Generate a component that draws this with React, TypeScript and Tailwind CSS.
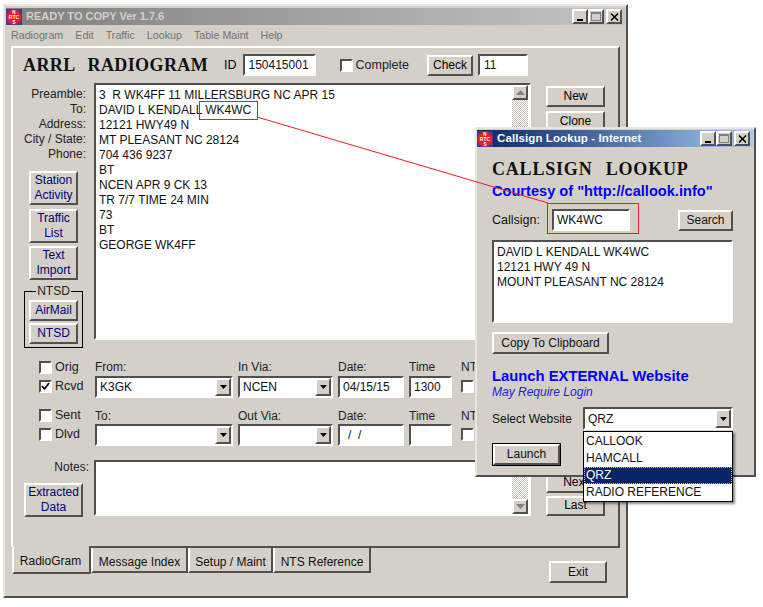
import type { ReactNode } from 'react';

const raised = 'border-2 border-t-white border-l-white border-r-[#505050] border-b-[#505050]';
const sunken = 'border-2 border-t-[#505050] border-l-[#505050] border-r-white border-b-white bg-white';

function AppIcon() {
  return (
    <svg width="16" height="16" viewBox="0 0 16 16" className="shrink-0">
      <rect width="16" height="16" fill="#3c3c9c" />
      <circle cx="8" cy="8" r="7.5" fill="#ee1c25" />
      <text x="8" y="5" textAnchor="middle" fontSize="4.6" fontWeight="700" fill="#fff" fontFamily="Liberation Sans">N</text>
      <text x="8" y="9.8" textAnchor="middle" fontSize="5" fontWeight="700" fill="#fff" fontFamily="Liberation Sans">RTC</text>
      <text x="8" y="14.8" textAnchor="middle" fontSize="4.6" fontWeight="700" fill="#fff" fontFamily="Liberation Sans">S</text>
    </svg>
  );
}

function TitleBar({ title, active }: { title: string; active?: boolean }) {
  return (
    <div
      className={
        active
          ? 'flex h-[17px] items-center bg-gradient-to-r from-[#0a246a] to-[#a6caf0] pr-[3px] text-white'
          : 'flex h-[17px] items-center bg-gradient-to-r from-[#808080] to-[#c4c4c4] pr-[3px] text-[#d4d0c8]'
      }
    >
      <AppIcon />
      <span className={active ? 'ml-[4px] text-[11.5px] font-bold tracking-[0.1px]' : 'ml-[4px] text-[11px] font-bold'}>{title}</span>
      <div className="ml-auto flex">
        <div className={`${raised} flex h-[15px] w-[16px] items-end bg-[#d4d0c8] pb-[1px] pl-[3px]`}>
          <div className="h-[2px] w-[6px] bg-black" />
        </div>
        <div className={`${raised} flex h-[15px] w-[16px] items-center justify-center bg-[#d4d0c8]`}>
          <div className="h-[9px] w-[10px] border border-t-2 border-[#808080]" />
        </div>
        <div className={`${raised} ml-[2px] flex h-[15px] w-[16px] items-center justify-center bg-[#d4d0c8]`}>
          <svg width="9" height="8" viewBox="0 0 9 8">
            <path d="M1 0.5L8 7.5M8 0.5L1 7.5" stroke="#000" strokeWidth="1.5" />
          </svg>
        </div>
      </div>
    </div>
  );
}

function Btn({ children, className = '' }: { children: ReactNode; className?: string }) {
  return (
    <div className={`${raised} flex items-center justify-center bg-[#d4d0c8] text-center text-[12px] leading-[15px] ${className}`}>
      {children}
    </div>
  );
}

function Field({ children, className = '' }: { children?: ReactNode; className?: string }) {
  return <div className={`${sunken} flex items-center pl-[3px] text-[12px] text-[#111] ${className}`}>{children}</div>;
}

function Combo({ value, className = '' }: { value?: string; className?: string }) {
  return (
    <div className={`${sunken} flex items-center pl-[3px] text-[12px] text-[#111] ${className}`}>
      <span>{value}</span>
      <div className={`${raised} ml-auto flex h-full w-[16px] items-center justify-center bg-[#d4d0c8]`}>
        <svg width="7" height="4" viewBox="0 0 7 4">
          <path d="M0 0H7L3.5 4Z" fill="#000" />
        </svg>
      </div>
    </div>
  );
}

function Check({ label, checked }: { label: string; checked?: boolean }) {
  return (
    <div className="flex h-[13px] items-center">
      <div className={`${sunken} flex h-[13px] w-[13px] shrink-0 items-center justify-center`}>
        {checked && (
          <svg width="9" height="9" viewBox="0 0 9 9">
            <path d="M1 4L3.5 7L8 1" stroke="#000" strokeWidth="1.7" fill="none" />
          </svg>
        )}
      </div>
      <span className="ml-[3px] text-[12.5px] text-[#222]">{label}</span>
    </div>
  );
}

function ScrollBar({ showUp, showDown }: { showUp?: boolean; showDown?: boolean }) {
  const arrowBtn = `${raised} flex h-[15px] w-full shrink-0 items-center justify-center bg-[#d4d0c8]`;
  return (
    <div className="flex h-full w-[16px] flex-col justify-between bg-[repeating-conic-gradient(#c8c4bc_0_25%,#ffffff_0_50%)] bg-[length:2px_2px]">
      {showUp && (
        <div className={arrowBtn}>
          <svg width="9" height="5" viewBox="0 0 9 5">
            <path d="M0 5H9L4.5 0Z" fill="#808080" />
          </svg>
        </div>
      )}
      <div />
      {showDown && (
        <div className={arrowBtn}>
          <svg width="9" height="5" viewBox="0 0 9 5">
            <path d="M0 0H9L4.5 5Z" fill="#808080" />
          </svg>
        </div>
      )}
    </div>
  );
}

const message = [
  '3  R WK4FF 11 MILLERSBURG NC APR 15',
  'DAVID L KENDALL WK4WC',
  '12121 HWY49 N',
  'MT PLEASANT NC 28124',
  '704 436 9237',
  'BT',
  'NCEN APR 9 CK 13',
  'TR 7/7 TIME 24 MIN',
  '73',
  'BT',
  'GEORGE WK4FF',
];

function MainWindow() {
  return (
    <div className="absolute left-[3px] top-[4px] flex h-[594px] w-[625px] flex-col border-2 border-t-[#e8e6e0] border-l-[#e8e6e0] border-r-[#505050] border-b-[#505050] bg-[#d4d0c8] px-px pt-[2px]">
      <TitleBar title="READY TO COPY Ver 1.7.6" />
      <div className="ml-[5px] flex h-[21px] items-center gap-[12px] text-[10.7px] text-[#707070]">
        <span>Radiogram</span>
        <span>Edit</span>
        <span>Traffic</span>
        <span>Lookup</span>
        <span>Table Maint</span>
        <span>Help</span>
      </div>

      <div className="ml-[5px] mr-[5px] flex h-[502px] flex-col border-2 border-t-white border-l-white border-r-[#505050] border-b-[#505050] text-[12px]">
        {/* header */}
        <div className="mt-[6px] flex h-[22px] items-center">
          <span className="ml-[10px] w-[201px] whitespace-pre font-['Liberation_Serif',serif] text-[18px] font-bold tracking-[0.4px] [word-spacing:8px] text-[#111]">ARRL RADIOGRAM</span>
          <span className="text-[12.5px]">ID</span>
          <Field className="ml-[6px] h-[22px] w-[73px]"><span className="ml-px">150415001</span></Field>
          <div className="ml-[24px]">
            <Check label="Complete" />
          </div>
          <Btn className="ml-[18px] h-[21px] w-[46px]">Check</Btn>
          <Field className="ml-[5px] h-[22px] w-[50px]"><span className="ml-px">11</span></Field>
        </div>

        {/* message body */}
        <div className="mt-[7px] flex h-[257px]">
          <div className="flex w-[81px] flex-col">
            <div className="flex flex-col items-end pr-[8px] pt-[4px] leading-[15px] text-[#222]">
              <span>Preamble:</span>
              <span>To:</span>
              <span>Address:</span>
              <span>City / State:</span>
              <span>Phone:</span>
            </div>
            <div className="mt-[9px] ml-[16px] flex flex-col">
              <Btn className="h-[34px] w-[49px] text-[#000080]">Station<br />Activity</Btn>
              <Btn className="mt-[4px] h-[34px] w-[49px] text-[#000080]">Traffic<br />List</Btn>
              <Btn className="mt-[3px] h-[34px] w-[49px] text-[#000080]">Text<br />Import</Btn>
            </div>
            <fieldset className="ml-[11px] mt-[4px] w-[58px] border border-black px-[4px] pb-[3px]">
              <legend className="mx-auto px-px text-[12px] leading-[15px] text-[#222]">NTSD</legend>
              <Btn className="mt-px h-[21px] w-[49px] text-[#000080]">AirMail</Btn>
              <Btn className="mt-[2px] h-[21px] w-[49px] text-[#000080]">NTSD</Btn>
            </fieldset>
          </div>
          <div className={`${sunken} flex h-full w-[437px] justify-between`}>
            <div className="pl-[3px] pt-[3px] text-[12px] leading-[15px] text-[#111]">
              {message.map((line, i) => (
                <div key={i} className="whitespace-pre">{line}</div>
              ))}
            </div>
            <div className="h-full pr-px">
              <ScrollBar showUp />
            </div>
          </div>
          <div className="ml-[15px] flex flex-col pt-[3px]">
            <Btn className="h-[21px] w-[59px]">New</Btn>
            <Btn className="mt-[4px] h-[21px] w-[59px]">Clone</Btn>
          </div>
        </div>

        {/* received row */}
        <div className="mt-[20px] flex">
          <div className="ml-[26px] flex w-[56px] flex-col gap-[6px] pt-[1px]">
            <Check label="Orig" />
            <Check label="Rcvd" checked />
          </div>
          <div className="flex gap-[5px] text-[#222]">
            <div className="flex flex-col">
              <span className="h-[16px] leading-[15px]">From:</span>
              <Combo value="K3GK" className="h-[22px] w-[138px]" />
            </div>
            <div className="flex flex-col">
              <span className="h-[16px] leading-[15px]">In Via:</span>
              <Combo value="NCEN" className="h-[22px] w-[95px]" />
            </div>
            <div className="flex flex-col">
              <span className="h-[16px] leading-[15px]">Date:</span>
              <Field className="h-[22px] w-[66px]">04/15/15</Field>
            </div>
            <div className="flex flex-col">
              <span className="h-[16px] leading-[15px]">Time</span>
              <Field className="h-[22px] w-[43px]">1300</Field>
            </div>
            <div className="ml-[4px] flex flex-col">
              <span className="h-[20px] leading-[15px]">NTS</span>
              <div className={`${sunken} h-[13px] w-[13px]`} />
            </div>
          </div>
        </div>

        {/* sent row */}
        <div className="mt-[11px] flex">
          <div className="ml-[26px] flex w-[56px] flex-col gap-[6px]">
            <Check label="Sent" />
            <Check label="Dlvd" />
          </div>
          <div className="flex gap-[5px] text-[#222]">
            <div className="flex flex-col">
              <span className="h-[15px] leading-[15px]">To:</span>
              <Combo className="h-[22px] w-[138px]" />
            </div>
            <div className="flex flex-col">
              <span className="h-[15px] leading-[15px]">Out Via:</span>
              <Combo className="h-[22px] w-[95px]" />
            </div>
            <div className="flex flex-col">
              <span className="h-[15px] leading-[15px]">Date:</span>
              <Field className="h-[22px] w-[66px] text-[#1d4fb0]"><span className="ml-[5px] whitespace-pre">/  /</span></Field>
            </div>
            <div className="flex flex-col">
              <span className="h-[15px] leading-[15px]">Time</span>
              <Field className="h-[22px] w-[43px]" />
            </div>
            <div className="ml-[4px] flex flex-col">
              <span className="h-[19px] leading-[15px]">NTS</span>
              <div className={`${sunken} h-[13px] w-[13px]`} />
            </div>
          </div>
        </div>

        {/* notes */}
        <div className="mt-[14px] flex h-[56px]">
          <div className="flex w-[81px] flex-col">
            <span className="self-end pr-[5px] leading-[15px] text-[#222]">Notes:</span>
            <Btn className="ml-[11px] mt-[8px] h-[34px] w-[59px] text-[#000080]">Extracted<br />Data</Btn>
          </div>
          <div className={`${sunken} h-full w-[437px]`}>
            <div className="ml-auto h-full w-[17px] pr-px">
              <ScrollBar showDown />
            </div>
          </div>
          <div className="ml-[15px] flex flex-col pt-[12px]">
            <Btn className="h-[21px] w-[59px]">Next</Btn>
            <Btn className="mt-[3px] h-[21px] w-[59px]">Last</Btn>
          </div>
        </div>
      </div>

      {/* tabs */}
      <div className="ml-[6px] mr-[5px] flex items-start text-[12px] text-[#111]">
        <div className="z-10 -mt-[2px] flex h-[28px] w-[79px] items-center justify-center rounded-b-[2px] border-2 border-t-0 border-l-white border-r-[#505050] border-b-[#505050] bg-[#d4d0c8] pr-[2px] pt-[3px]">RadioGram</div>
        <div className="flex h-[25px] w-[97px] items-center justify-center border-2 border-t-0 border-l-white border-r-[#505050] border-b-[#505050] pt-[5px]">Message Index</div>
        <div className="flex h-[25px] w-[85px] items-center justify-center border-2 border-t-0 border-l-white border-r-[#505050] border-b-[#505050] pt-[5px]">Setup / Maint</div>
        <div className="flex h-[25px] w-[98px] items-center justify-center border-2 border-t-0 border-l-white border-r-[#505050] border-b-[#505050] pt-[5px]">NTS Reference</div>
        <Btn className="ml-[178px] mt-[13px] h-[22px] w-[58px]">Exit</Btn>
      </div>
    </div>
  );
}

function LookupWindow() {
  return (
    <div className="absolute left-[475px] top-[127px] z-20 flex h-[350px] w-[281px] flex-col border-2 border-t-[#e8e6e0] border-l-[#e8e6e0] border-r-[#505050] border-b-[#505050] bg-[#d4d0c8] pr-px pt-px text-[12px] text-[#111]">
      <TitleBar title="Callsign Lookup - Internet" active />
      <div className="flex flex-col pl-[15px] pr-[20px]">
        <span className="mt-[10px] whitespace-pre font-['Liberation_Serif',serif] text-[18px] font-bold leading-[25px] tracking-[0.8px] [word-spacing:8px]">CALLSIGN LOOKUP</span>
        <span className="text-[14.6px] font-bold leading-[18px] text-[#0000ff]">Courtesy of "http://callook.info"</span>
        <div className="mt-[9px] flex items-center">
          <span className="w-[60px] text-[12.5px]">Callsign:</span>
          <Field className="h-[22px] w-[78px]">WK4WC</Field>
          <Btn className="ml-[48px] h-[21px] w-[55px]">Search</Btn>
        </div>
        <div className={`${sunken} mt-[9px] h-[83px] w-[241px] px-[3px] pt-[3px] text-[12px] leading-[15px]`}>
          <div>DAVID L KENDALL WK4WC</div>
          <div>12121 HWY 49 N</div>
          <div>MOUNT PLEASANT NC 28124</div>
        </div>
        <Btn className="mt-[9px] h-[22px] w-[117px]">Copy To Clipboard</Btn>
        <span className="mt-[13px] text-[14.8px] font-bold leading-[18px] text-[#0000ff]">Launch EXTERNAL Website</span>
        <span className="text-[12px] italic leading-[15px] text-[#2020e0]">May Require Login</span>
        <div className="mt-[7px] flex items-center">
          <span className="w-[91px] text-[12px]">Select Website</span>
          <div className="relative">
            <Combo value="QRZ" className="h-[23px] w-[150px]" />
            <div className="absolute left-0 top-[24px] z-30 flex w-[150px] flex-col border border-black bg-white pt-px text-[12px] leading-[17px] shadow-[2px_2px_2px_rgba(0,0,0,0.45)]">
              <span className="pl-[2px]">CALLOOK</span>
              <span className="pl-[2px]">HAMCALL</span>
              <span className="bg-[#0a246a] pl-[2px] text-white outline-1 -outline-offset-1 outline-dotted outline-[#d8c878]">QRZ</span>
              <span className="pl-[2px]">RADIO REFERENCE</span>
            </div>
          </div>
        </div>
        <div className="mt-[13px] w-[69px] border border-black">
          <Btn className="h-[21px] w-full">Launch</Btn>
        </div>
      </div>
    </div>
  );
}

export default function App() {
  return (
    <div className="relative h-[607px] w-[763px] overflow-hidden bg-white font-['Liberation_Sans',Arial,sans-serif]">
      <MainWindow />
      <LookupWindow />
      {/* red callout from the message text to the lookup window */}
      <div className="absolute left-[199px] top-[101px] z-10 h-[19px] w-[59px] border border-[#e81c24]" />
      <div className="absolute left-[547px] top-[203px] z-30 h-[31px] w-[92px] border border-[#e81c24]" />
      <svg width="763" height="607" className="pointer-events-none absolute left-0 top-0 z-30">
        <line x1="257" y1="117" x2="548" y2="203" stroke="#e81c24" strokeWidth="1" />
      </svg>
    </div>
  );
}
